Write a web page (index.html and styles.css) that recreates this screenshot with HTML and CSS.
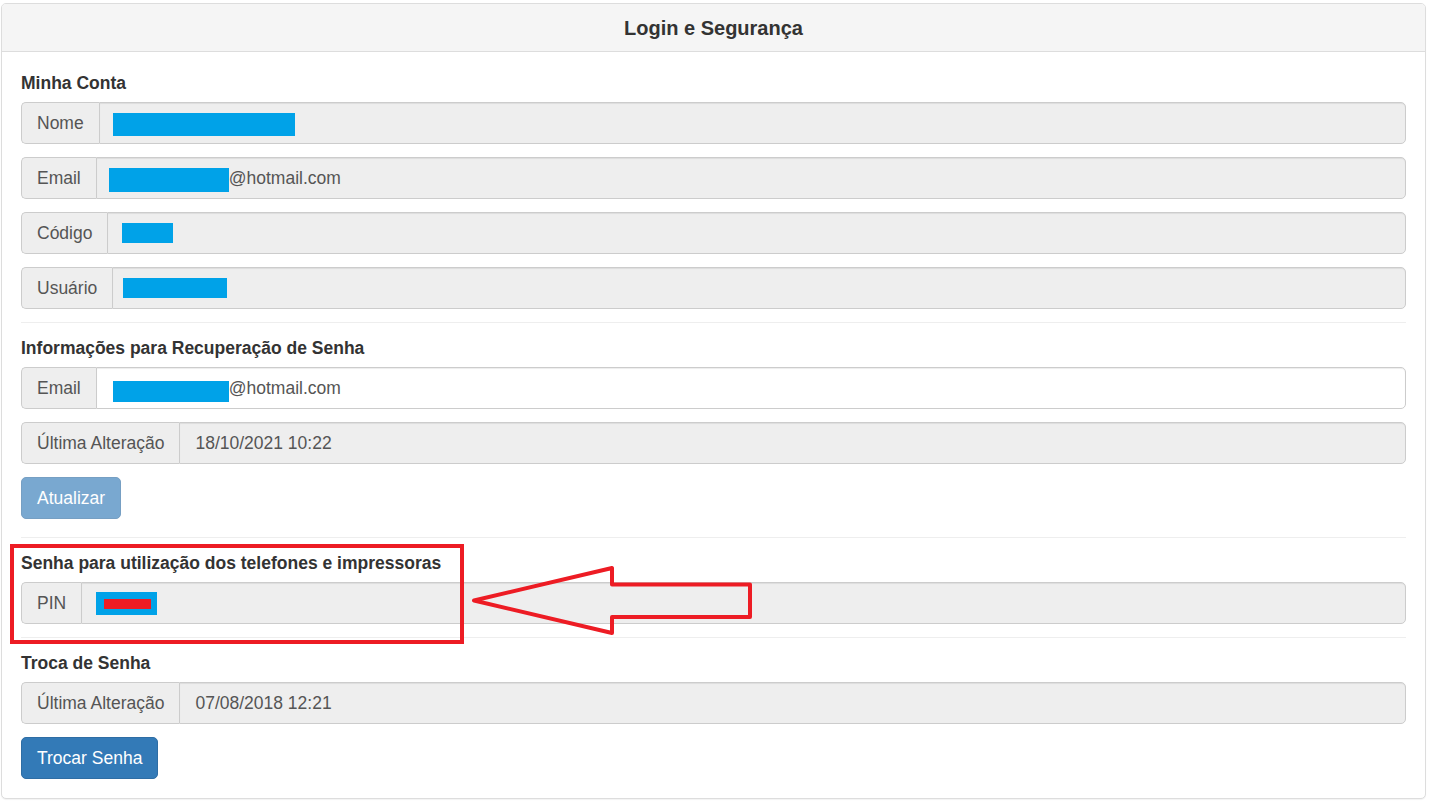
FILE: index.html
```html
<!DOCTYPE html>
<html lang="pt-BR">
<head>
<meta charset="utf-8">
<title>Login e Segurança</title>
<link rel="stylesheet" href="styles.css">
</head>
<body>
<div class="page">
  <div class="panel">
    <div class="panel-heading">
      <h3 class="panel-title">Login e Segurança</h3>
    </div>
    <div class="panel-body">
      <label class="section-label">Minha Conta</label>
      <div class="input-group">
        <span class="addon">Nome</span>
        <div class="field"><span class="redact r-nome"></span></div>
      </div>
      <div class="input-group">
        <span class="addon">Email</span>
        <div class="field"><span class="redact r-email1"></span><span>@hotmail.com</span></div>
      </div>
      <div class="input-group">
        <span class="addon">Código</span>
        <div class="field"><span class="redact r-codigo"></span></div>
      </div>
      <div class="input-group">
        <span class="addon">Usuário</span>
        <div class="field"><span class="redact r-usuario"></span></div>
      </div>

      <div class="divider"></div>

      <label class="section-label">Informações para Recuperação de Senha</label>
      <div class="input-group">
        <span class="addon">Email</span>
        <div class="field field-editable"><span class="redact r-email2"></span><span>@hotmail.com</span></div>
      </div>
      <div class="input-group">
        <span class="addon">Última Alteração</span>
        <div class="field">18/10/2021 10:22</div>
      </div>
      <div class="actions actions-spaced">
        <button class="btn btn-primary btn-disabled" type="button" disabled>Atualizar</button>
      </div>

      <div class="divider"></div>

      <label class="section-label">Senha para utilização dos telefones e impressoras</label>
      <div class="input-group">
        <span class="addon">PIN</span>
        <div class="field"><span class="redact r-pin"><span class="redact-inner"></span></span></div>
      </div>

      <div class="divider"></div>

      <label class="section-label">Troca de Senha</label>
      <div class="input-group">
        <span class="addon">Última Alteração</span>
        <div class="field">07/08/2018 12:21</div>
      </div>
      <div class="actions">
        <button class="btn btn-primary" type="button">Trocar Senha</button>
      </div>
    </div>
  </div>

  <svg class="annotation" width="1429" height="804" viewBox="0 0 1429 804" aria-hidden="true">
    <rect x="12" y="546" width="450" height="96" fill="none" stroke="#ed1c24" stroke-width="4"/>
    <polygon points="474,600.5 612,568 612,584.5 750,584.5 750,617 612,617 612,633" fill="none" stroke="#ed1c24" stroke-width="4" stroke-linejoin="round"/>
  </svg>
</div>
</body>
</html>
```

FILE: styles.css
```css
html, body {
  margin: 0;
  padding: 0;
  background: #ffffff;
}

body {
  font-family: "Liberation Sans", Arial, Helvetica, sans-serif;
  font-size: 17.5px;
  line-height: 25px;
  color: #333333;
}

.page {
  position: relative;
  padding: 3px 3px 0 1px;
  width: 1429px;
  height: 804px;
  box-sizing: border-box;
}

.panel {
  background: #ffffff;
  border: 1px solid #dddddd;
  border-radius: 5px;
  box-shadow: 0 1px 1px rgba(0, 0, 0, 0.05);
}

.panel-heading {
  background: #f5f5f5;
  border-bottom: 1px solid #dddddd;
  border-radius: 4px 4px 0 0;
  padding: 12.5px 15px;
  text-align: center;
}

.panel-title {
  margin: 0;
  font-size: 20px;
  line-height: 22px;
  font-weight: bold;
  color: #333333;
}

.panel-body {
  padding: 19px;
}

.section-label {
  display: block;
  font-weight: bold;
  color: #333333;
  line-height: 25px;
  margin-bottom: 6px;
}

.input-group {
  display: flex;
  height: 42px;
  margin-bottom: 13px;
}

.addon {
  display: flex;
  align-items: center;
  padding: 0 15px;
  background: #eeeeee;
  border: 1px solid #cccccc;
  border-right: 0;
  border-radius: 5px 0 0 5px;
  color: #555555;
  white-space: nowrap;
}

.field {
  flex: 1;
  display: flex;
  align-items: center;
  padding: 0 15px;
  background: #eeeeee;
  border: 1px solid #cccccc;
  border-radius: 0 5px 5px 0;
  box-shadow: inset 0 1px 1px rgba(0, 0, 0, 0.075);
  color: #555555;
  white-space: nowrap;
}

.field-editable {
  background: #ffffff;
}

.redact {
  display: inline-block;
  background: #00a2e8;
  flex: none;
}

.r-nome { width: 182px; height: 23px; margin-left: -2px; margin-top: 2px; }
.r-email1 { width: 120px; height: 24px; margin-left: -3px; margin-top: 4px; }
.r-codigo { width: 51px; height: 20px; margin-left: -1px; }
.r-usuario { width: 104px; height: 20px; margin-left: -5px; }
.r-email2 { width: 116px; height: 21px; margin-left: 1px; margin-top: 7px; }
.r-pin {
  width: 61px;
  height: 23px;
  margin-left: -1px;
  margin-top: 1px;
  box-sizing: border-box;
  padding: 7px 6px 6px 8px;
}

.redact-inner {
  display: block;
  width: 47px;
  height: 10px;
  background: #ed1c24;
}

.divider {
  border-top: 1px solid #eeeeee;
  margin: 0 0 13px;
}

.actions {
  display: flex;
}

.actions-spaced {
  margin-bottom: 18px;
}

.btn {
  font-family: inherit;
  font-size: 17.5px;
  line-height: 25px;
  padding: 7.5px 15px;
  border: 1px solid transparent;
  border-radius: 5px;
  cursor: pointer;
}

.btn-primary {
  color: #ffffff;
  background: #337ab7;
  border-color: #2e6da4;
}

.btn-disabled {
  opacity: 0.65;
  cursor: not-allowed;
}

.annotation {
  position: absolute;
  left: 0;
  top: 0;
  pointer-events: none;
}
```
